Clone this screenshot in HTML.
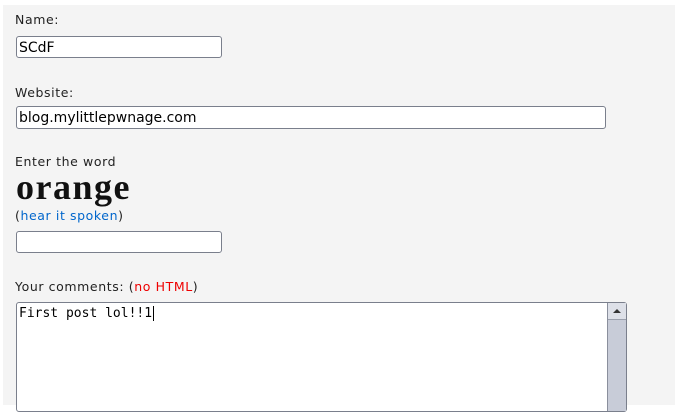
<!DOCTYPE html>
<html><head><style>
html,body{margin:0;padding:0;background:#fff;width:675px;height:403px;overflow:hidden}
#p{position:absolute;left:3px;top:5px;width:672px;height:400px;background:#f4f4f4}
.t{position:absolute;font-family:"DejaVu Sans",sans-serif;font-size:12.5px;letter-spacing:0.6px;color:#222;white-space:nowrap;line-height:14px}
.in{position:absolute;background:#fff;border:1px solid #7a7f8c;border-radius:3px;box-sizing:border-box;font-family:"DejaVu Sans",sans-serif;font-size:14px;color:#000;padding:2px 2px;line-height:18px}
a{color:#0066cc;text-decoration:none}
.r{color:#e00}
</style></head><body>
<div id="p"></div>
<div class="t" style="left:15px;top:13px">Name:</div>
<div class="in" style="left:16px;top:36px;width:206px;height:22px">SCdF</div>
<div class="t" style="left:15px;top:86px">Website:</div>
<div class="in" style="left:16px;top:106px;width:590px;height:23px">blog.mylittlepwnage.com</div>
<div class="t" style="left:15px;top:155px">Enter the word</div>
<div class="t" style="left:16px;top:170px;font-family:'Liberation Serif',serif;font-weight:bold;font-size:36px;line-height:34px;color:#111;letter-spacing:1.5px">orange</div>
<div class="t" style="left:15px;top:209px">(<a>hear it spoken</a>)</div>
<div class="in" style="left:16px;top:231px;width:206px;height:22px"></div>
<div class="t" style="left:15px;top:280px">Your comments: (<span class="r">no HTML</span>)</div>
<div class="in" style="left:16px;top:302px;width:611px;height:110px;font-family:'DejaVu Sans Mono',monospace;font-size:13px;padding:2px 2px">First post lol!!1<span style="border-left:1px solid #000;margin-left:1px"></span>
<div style="position:absolute;right:0;top:0;width:18px;height:108px;background:#c8ccd8;border-left:1px solid #8a8f9c">
<div style="height:16px;background:#dde0e8;border-bottom:1px solid #9a9fac;position:relative"><div style="position:absolute;left:5px;top:6px;width:0;height:0;border-left:4px solid transparent;border-right:4px solid transparent;border-bottom:4px solid #333"></div></div>
</div></div>
</body></html>
